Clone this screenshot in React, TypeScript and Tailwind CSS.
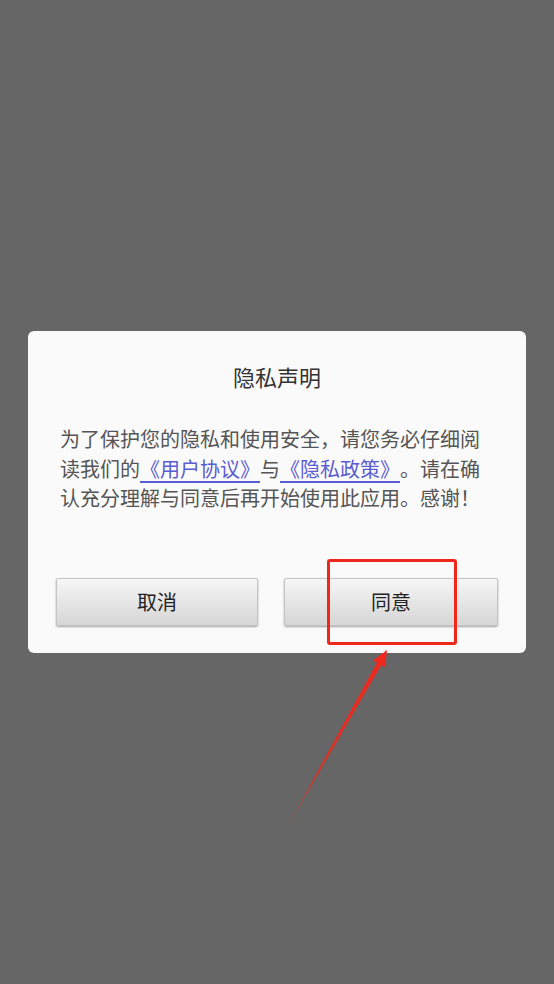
import React from "react";

const cjk = { fontFamily: '"Noto Sans CJK SC", "Noto Sans", sans-serif' };

function DialogButton(props: { label: string; width: string }) {
  return (
    <button
      type="button"
      className={`${props.width} h-[48px] rounded-[2px] border border-[#c4c4c4] bg-gradient-to-b from-[#f6f6f6] to-[#d6d6d6] text-[20px] text-[#222] shadow-[0_1px_2px_rgba(0,0,0,0.35)]`}
    >
      {props.label}
    </button>
  );
}

function PrivacyDialog() {
  return (
    <div className="w-[498px] rounded-[6px] bg-[#fafafa] px-[28px] pt-[30px] pb-[27px]" style={cjk}>
      <h1 className="text-center text-[22px] leading-[30px] text-[#333]">隐私声明</h1>
      <p className="mt-[33px] px-[4px] text-[20px] leading-[29.5px] text-[#555] [text-spacing-trim:space-all]">
        为了保护您的隐私和使用安全，请您务必仔细阅读我们的
        <a className="text-[#5c5cd2] underline underline-offset-[4px] decoration-[#5c5cd2]">《用户协议》</a>
        与
        <a className="text-[#5c5cd2] underline underline-offset-[4px] decoration-[#5c5cd2]">《隐私政策》</a>
        。请在确认充分理解与同意后再开始使用此应用。感谢！
      </p>
      <div className="mt-[65px] flex justify-between">
        <DialogButton label="取消" width="w-[202px]" />
        <DialogButton label="同意" width="w-[214px]" />
      </div>
    </div>
  );
}

function App() {
  return (
    <div className="relative flex h-[984px] w-[554px] items-center justify-center bg-[#666666]">
      <PrivacyDialog />

      {/* annotation: highlight box + arrow */}
      <div className="pointer-events-none absolute left-[327px] top-[559px] h-[86px] w-[130px] rounded-[3px] border-[3px] border-[#f0281c]" />
      <svg className="pointer-events-none absolute left-0 top-0" width="554" height="984" viewBox="0 0 554 984">
        <defs>
          <linearGradient id="arrowFade" x1="280" y1="840" x2="387" y2="650" gradientUnits="userSpaceOnUse">
            <stop offset="0" stopColor="#f0281c" stopOpacity="0" />
            <stop offset="0.35" stopColor="#f0281c" stopOpacity="0.8" />
            <stop offset="1" stopColor="#f0281c" />
          </linearGradient>
        </defs>
        <polygon
          points="280,840 376.9,662.7 373,660.5 387,650 385.2,667.3 381.3,665.1"
          fill="url(#arrowFade)"
        />
      </svg>
    </div>
  );
}

export default App;
